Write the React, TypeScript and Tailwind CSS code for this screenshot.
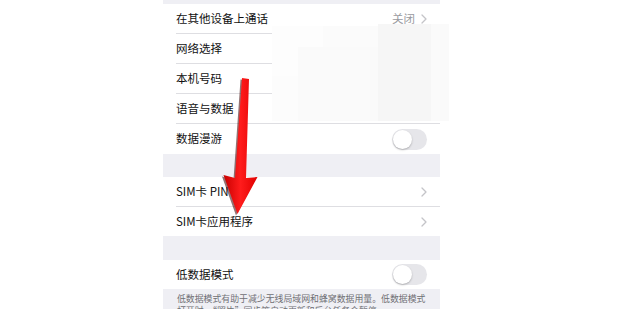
import React from "react";

function Chevron() {
  return (
    <svg width="6" height="10" viewBox="0 0 6 10" className="shrink-0">
      <path d="M1 1 L5 5 L1 9" fill="none" stroke="#c4c4c8" strokeWidth="1.3" strokeLinecap="round" strokeLinejoin="round" />
    </svg>
  );
}

function Toggle() {
  return (
    <div className="relative w-[35px] h-[21px] rounded-full bg-[#e6e6ea] shrink-0">
      <div className="absolute left-[1px] top-[1px] w-[19px] h-[19px] rounded-full bg-white shadow-[0_1px_2px_rgba(0,0,0,0.25)]" />
    </div>
  );
}

function Row({
  label,
  right,
  h = "h-[30px]",
  last = false,
}: {
  label: string;
  right?: React.ReactNode;
  h?: string;
  last?: boolean;
}) {
  return (
    <div className={`flex items-center justify-between pr-[13px] ${h} ${last ? "" : "border-b border-[#dedee2]"}`}>
      <span className="text-[11.5px] leading-none text-[#111]">{label}</span>
      {right}
    </div>
  );
}

export default function App() {
  return (
    <div className="relative w-[620px] h-[309px] overflow-hidden bg-white font-['Noto_Sans_CJK_SC','Noto_Sans',sans-serif]">
      <div className="ml-[163px] w-[277px] h-[309px] bg-[#efeff4] flex flex-col">
        <div className="h-[4px] shrink-0" />
        <div className="bg-white pl-[13px] shrink-0">
          <Row
            label="在其他设备上通话"
            right={
              <div className="flex items-center gap-[6px]">
                <span className="text-[11.5px] leading-none text-[#9a9aa0]">关闭</span>
                <Chevron />
              </div>
            }
          />
          <Row label="网络选择" />
          <Row label="本机号码" />
          <Row label="语音与数据" />
          <Row label="数据漫游" right={<Toggle />} last />
        </div>
        <div className="h-[23px] shrink-0" />
        <div className="bg-white pl-[13px] shrink-0">
          <Row label="SIM卡 PIN" right={<Chevron />} />
          <Row label="SIM卡应用程序" right={<Chevron />} h="h-[29px]" last />
        </div>
        <div className="h-[24px] shrink-0" />
        <div className="bg-white pl-[13px] shrink-0">
          <Row label="低数据模式" right={<Toggle />} h="h-[29px]" last />
        </div>
        <div className="px-[14px] pt-[4px] text-[8.9px] leading-[12px] text-[#707075]">
          低数据模式有助于减少无线局域网和蜂窝数据用量。低数据模式打开时，“照片”同步等自动更新和后台任务会暂停。
        </div>
      </div>

      {/* mosaic blur over the right part */}
      <div className="absolute left-[272px] top-[26px] w-[172px] h-[95px] bg-[#fdfdfd]" />
      <div className="absolute left-[323px] top-[26px] w-[55px] h-[21px] bg-[#fbfbfb]" />
      <div className="absolute left-[298px] top-[47px] w-[80px] h-[74px] bg-[#fafafa]" />
      <div className="absolute left-[378px] top-[24px] w-[53px] h-[97px] bg-[#f6f6f6]" />
      <div className="absolute left-[431px] top-[24px] w-[18px] h-[97px] bg-[#fafafa]" />
      <div className="absolute left-[272px] top-[76px] w-[26px] h-[45px] bg-[#fcfcfc]" />

      {/* red arrow */}
      <svg className="absolute left-0 top-0 pointer-events-none" width="620" height="309" viewBox="0 0 620 309">
        <defs>
          <linearGradient id="ar" x1="0" y1="0" x2="1" y2="0">
            <stop offset="0" stopColor="#c80000" />
            <stop offset="0.5" stopColor="#ff1c1c" />
            <stop offset="1" stopColor="#e00000" />
          </linearGradient>
        </defs>
        <polygon
          points="242,78 249,79 246,178 257.5,177 237.5,214 223.5,175 235,178"
          fill="#3a0000"
          opacity="0.55"
          transform="translate(-1.5,1.5)"
        />
        <polygon
          points="242,78 249,79 246,178 257.5,177 237.5,214 223.5,175 235,178"
          fill="url(#ar)"
        />
      </svg>
    </div>
  );
}
